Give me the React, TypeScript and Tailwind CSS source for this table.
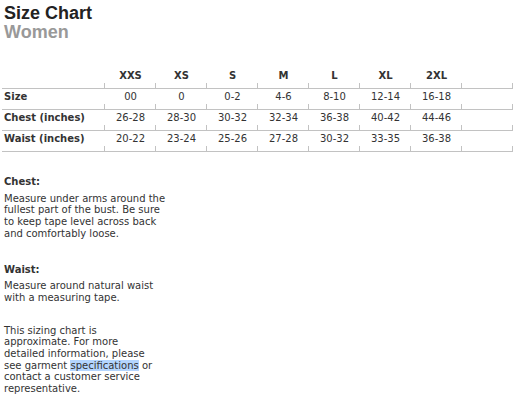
const sizes = ['XXS', 'XS', 'S', 'M', 'L', 'XL', '2XL', '']

const rows = [
  { label: 'Size', values: ['00', '0', '0-2', '4-6', '8-10', '12-14', '16-18', ''] },
  { label: 'Chest (inches)', values: ['26-28', '28-30', '30-32', '32-34', '36-38', '40-42', '44-46', ''] },
  { label: 'Waist (inches)', values: ['20-22', '23-24', '25-26', '27-28', '30-32', '33-35', '36-38', ''] },
]

function Cell({ children, bold, left }: { children?: React.ReactNode; bold?: boolean; left?: boolean }) {
  return (
    <div className="flex flex-col h-[21px] border-b border-[#c2c2c2]">
      <div
        className={`flex-1 flex items-center ${left ? 'justify-start pl-[2px]' : 'justify-center'} ${
          bold ? 'font-bold' : ''
        }`}
      >
        {children}
      </div>
      <div className="h-[5px] border-r border-[#c2c2c2]" />
    </div>
  )
}

export default function App() {
  return (
    <div className="w-[519px] h-[402px] bg-white overflow-hidden text-[#333] font-['DejaVu_Sans',Verdana,sans-serif] text-[10px]">
      <div className="pl-[4px] pt-[4px] font-['Liberation_Sans',Arial,sans-serif] font-bold text-[18px] leading-[19px]">
        <div className="text-[#222]">Size Chart</div>
        <div className="text-[#999]">Women</div>
      </div>

      <div className="ml-[2px] mt-[26px] w-[512px]">
        <div className="grid grid-cols-[103px_repeat(8,51px)]">
          <Cell />
          {sizes.map((s, i) => (
            <Cell key={i} bold>
              {s}
            </Cell>
          ))}
        </div>
        {rows.map((r) => (
          <div key={r.label} className="grid grid-cols-[103px_repeat(8,51px)]">
            <Cell bold left>
              {r.label}
            </Cell>
            {r.values.map((v, i) => (
              <Cell key={i}>{v}</Cell>
            ))}
          </div>
        ))}
      </div>

      <div className="pl-[4px] mt-[24px] leading-[11.7px]">
        <div className="font-bold">Chest:</div>
        <p className="mt-[5px]">
          Measure under arms around the
          <br />
          fullest part of the bust. Be sure
          <br />
          to keep tape level across back
          <br />
          and comfortably loose.
        </p>

        <div className="font-bold mt-[24px]">Waist:</div>
        <p className="mt-[5px]">
          Measure around natural waist
          <br />
          with a measuring tape.
        </p>

        <p className="mt-[21px]">
          This sizing chart is
          <br />
          approximate. For more
          <br />
          detailed information, please
          <br />
          see garment <span className="bg-[#b4d5fe]">specifications</span> or
          <br />
          contact a customer service
          <br />
          representative.
        </p>
      </div>
    </div>
  )
}
